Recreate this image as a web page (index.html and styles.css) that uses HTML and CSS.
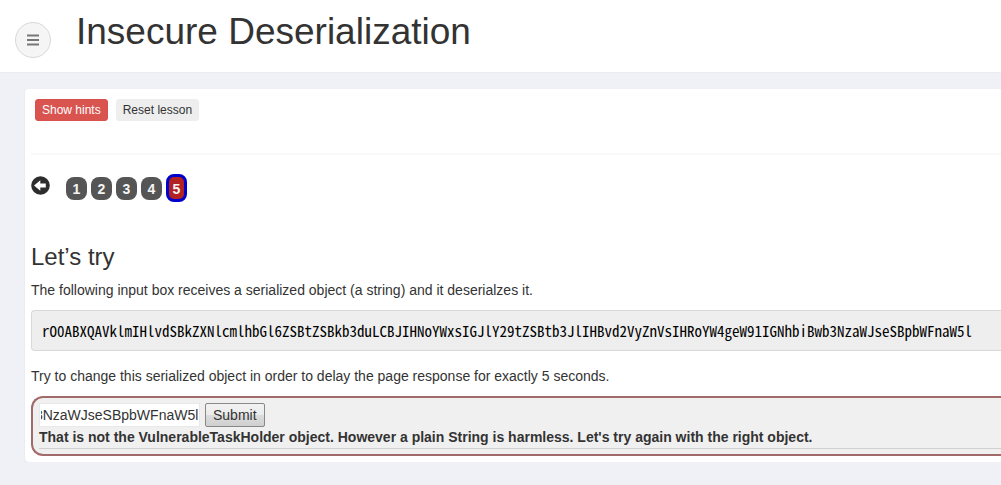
FILE: index.html
```html
<!DOCTYPE html>
<html lang="en">
<head>
  <meta charset="UTF-8">
  <meta name="viewport" content="width=device-width, initial-scale=1.0">
  <title>Insecure Deserialization</title>
  <link rel="stylesheet" href="styles.css">
</head>
<body>
  <header class="header">
    <button class="menu-toggle" type="button" aria-label="Toggle menu">
      <svg width="14" height="12" viewBox="0 0 14 12">
        <path d="M1 1.5h12M1 6h12M1 10.5h12" stroke="#777" stroke-width="2"/>
      </svg>
    </button>
    <h1 class="title">Insecure Deserialization</h1>
  </header>

  <main class="panel">
    <div class="toolbar">
      <button class="btn btn-danger" type="button">Show hints</button>
      <button class="btn" type="button">Reset lesson</button>
    </div>

    <nav class="pages">
      <a class="prev" href="#4" aria-label="Previous page">
        <svg width="19" height="19" viewBox="0 0 19 19">
          <circle cx="9.5" cy="9.5" r="9.3" fill="#2d2d2d"/>
          <path d="M3 9.5L9.3 4.2v3.3h5.5v4H9.3v3.3z" fill="#fff"/>
        </svg>
      </a>
      <a class="page" href="#1">1</a>
      <a class="page" href="#2">2</a>
      <a class="page" href="#3">3</a>
      <a class="page" href="#4">4</a>
      <a class="page active" href="#5">5</a>
    </nav>

    <section class="lesson">
      <h2>Let’s try</h2>
      <p>The following input box receives a serialized object (a string) and it deserialzes it.</p>
      <pre class="code">rO0ABXQAVklmIHlvdSBkZXNlcmlhbGl6ZSBtZSBkb3duLCBJIHNoYWxsIGJlY29tZSBtb3JlIHBvd2VyZnVsIHRoYW4geW91IGNhbiBwb3NzaWJseSBpbWFnaW5l</pre>
      <p>Try to change this serialized object in order to delay the page response for exactly 5 seconds.</p>

      <form class="attack">
        <div class="row">
          <input class="token" type="text" aria-label="Serialized object" value="rO0ABXQAVklmIHlvdSBkZXNlcmlhbGl6ZSBtZSBkb3duLCBJIHNoYWxsIGJlY29tZSBtb3JlIHBvd2VyZnVsIHRoYW4geW91IGNhbiBwb3NzaWJseSBpbWFnaW5l">
          <button class="submit" type="button">Submit</button>
        </div>
        <div class="feedback">That is not the VulnerableTaskHolder object. However a plain String is harmless. Let's try again with the right object.</div>
      </form>
    </section>
  </main>

  <script>
    // show the end of the token
    var token = document.querySelector('.token');
    token.scrollLeft = token.scrollWidth;
  </script>
</body>
</html>
```
FILE: styles.css
```css
* {
  box-sizing: border-box;
}

body {
  margin: 0;
  background-color: #f0f1f7;
  color: #333;
  font: 14px/20px "Liberation Sans", Arial, sans-serif;
}

button, input {
  font-family: inherit;
  color: inherit;
}

.header {
  display: flex;
  align-items: flex-start;
  gap: 25px;
  height: 73px;
  padding: 9px 15px;
  background-color: #fff;
  border-bottom: 1px solid #ebebf0;
}

.menu-toggle {
  display: flex;
  align-items: center;
  justify-content: center;
  width: 36px;
  height: 36px;
  margin-top: 13px;
  padding: 0;
  background-color: #f5f5f5;
  border: 1px solid #d8d8d8;
  border-radius: 50%;
}

.title {
  margin: 0;
  font-size: 37px;
  font-weight: normal;
  line-height: 46px;
}

.panel {
  margin: 16px 0 0 25px;
  padding-bottom: 6px;
  background-color: #fff;
  border-radius: 4px 0 0 4px;
  box-shadow: 0 1px 2px #dedee6;
}

.toolbar {
  display: flex;
  align-items: flex-start;
  gap: 8px;
  height: 66px;
  margin-left: 6px;
  padding: 10px 4px;
  border-bottom: 2px solid #f9f9f9;
}

.btn {
  height: 22px;
  padding: 0 6px;
  background-color: #eee;
  border: 1px solid #eee;
  border-radius: 3px;
  font-size: 12px;
  line-height: 20px;
}

.btn-danger {
  background-color: #d9534f;
  border-color: #d9504c;
  color: #fff;
}

.pages {
  display: flex;
  align-items: center;
  gap: 4px;
  margin-left: 6px;
  padding-top: 19px;
}

.prev {
  height: 24px;
  margin-right: 12px;
}

.page {
  width: 21px;
  height: 23px;
  background-color: #555;
  border-radius: 8px;
  color: #f5f5f5;
  font-weight: bold;
  line-height: 24px;
  text-align: center;
  text-decoration: none;
}

.active {
  height: 28px;
  background-color: #b22222;
  border: 3px solid #00c;
}

.lesson {
  margin-left: 6px;
}

h2 {
  margin: 40px 0 8px;
  font-size: 24px;
  font-weight: normal;
  line-height: 30px;
}

p {
  margin: 0 0 10px;
}

.code {
  margin: 0 0 15px;
  padding: 10px;
  overflow: hidden;
  background-color: #eee;
  border: 1px solid #d8d8d8;
  border-right: 0;
  border-radius: 4px 0 0 4px;
  color: #000;
  font: 15px/19px "Noto Sans Mono CJK SC", "Liberation Mono", monospace;
}

.attack {
  padding: 5px 0 5px 6px;
  background-color: #f0f0f0;
  border: 2px solid #a36a6a;
  border-right: 0;
  border-radius: 12px 0 0 12px;
}

.row {
  display: flex;
  gap: 5px;
}

.token {
  width: 161px;
  height: 24px;
  padding: 0 1px;
  background-color: #fff;
  border: 1px solid #e8e8e8;
  font-size: 14px;
}

.submit {
  height: 24px;
  padding: 0 7px;
  background: linear-gradient(#f2f2f2, #ebebeb 50%, #ddd 50%, #cfcfcf);
  border: 1px solid #888;
  border-radius: 2px;
  font-size: 14px;
}

.feedback {
  padding-bottom: 1px;
  border-bottom: 1px solid #d0d0d0;
  font-weight: bold;
}
```
